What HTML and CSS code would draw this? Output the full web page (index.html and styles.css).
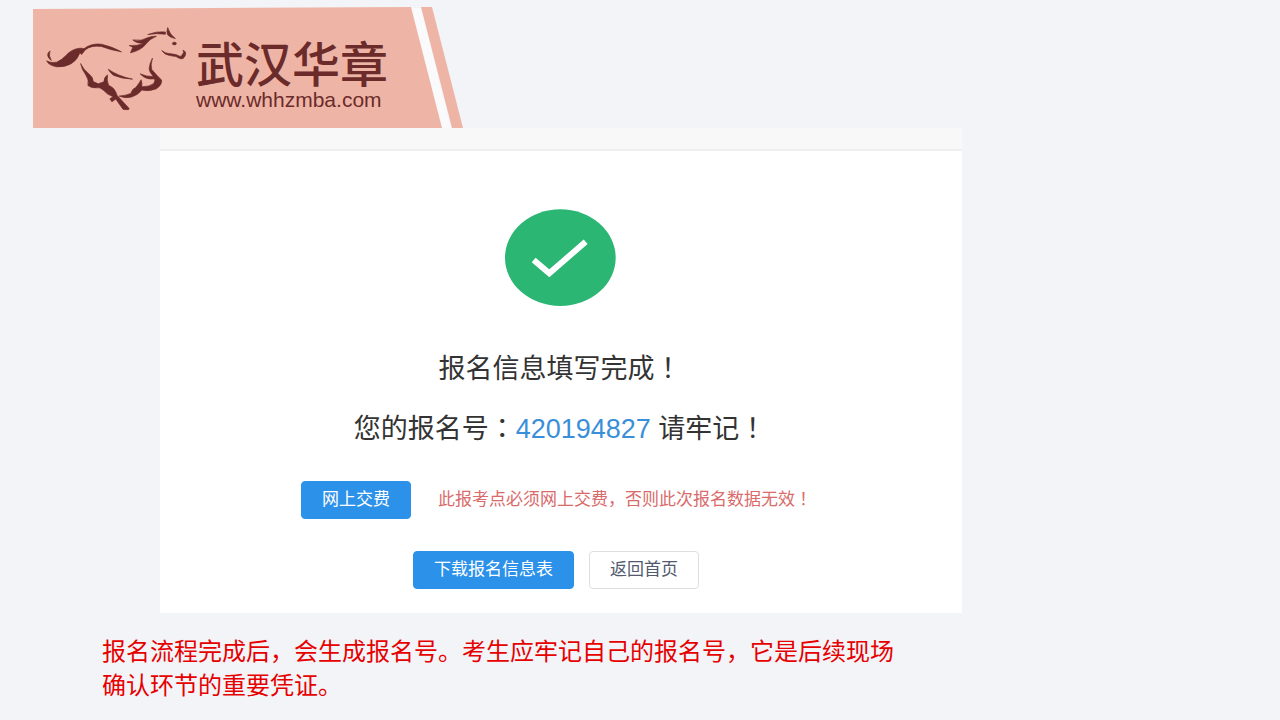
FILE: index.html
```html
<!DOCTYPE html>
<html lang="zh-CN">
<head>
    <meta charset="UTF-8">
    <meta name="viewport" content="width=device-width, initial-scale=1.0">
    <title>报名信息填写完成</title>
    <link rel="stylesheet" href="styles.css">
</head>
<body>
    <header class="banner">
        <svg class="banner-bg" viewBox="0 0 430 120" aria-hidden="true">
            <path fill="#fafafc" d="M377 0H388L418 120H408Z"/>
            <path fill="#eeb5a6" d="M0 1L378 -1L409 120H0Z"/>
            <path fill="#eeb5a6" d="M388 -1H399L430 120H419Z"/>
        </svg>
        <div class="brand">
            <svg class="horse" viewBox="45 75 430 260" fill="#6b2b2b" stroke="#6b2b2b" stroke-width="2" aria-hidden="true">
                <!-- 尾巴和背部 -->
                <path d="M60 152Q44 165 64 181Q55 166 60 152Z"/>
                <path d="M50 182Q62 190 80 186Q95 180 108 166Q125 146 150 144L163 145Q185 128 215 132Q250 140 275 155Q240 149 215 139Q185 134 166 149L155 163L150 158Q142 180 125 190Q105 202 80 200Q56 196 50 182Z"/>
                <!-- 头部和鬃毛 -->
                <path d="M302 158L309 141L298 136Q325 138 340 128Q320 130 309 119Q335 124 355 112Q368 107 380 108Q360 116 350 130Q335 150 302 158Z"/>
                <path d="M354 103Q380 92 407 95V102Q380 98 354 103Z"/>
                <path d="M414 82Q420 103 437 115Q420 112 413 103Q410 92 414 82Z"/>
                <ellipse cx="434" cy="130" rx="6" ry="4"/>
                <path d="M396 151Q405 160 425 161Q440 162 450 168Q458 170 458 162Q464 158 460 150Q471 154 467 165Q462 179 450 175Q440 167 425 167Q405 165 396 151Z"/>
                <!-- 前腿、腹部和后腿 -->
                <path d="M368 174Q362 195 366 208Q380 225 396 240Q397 255 380 266Q360 275 336 270Q325 285 305 291Q285 296 268 288Q290 286 303 280Q308 265 318 262Q328 250 334 239Q338 250 336 260Q360 260 372 250Q378 240 373 236Q348 240 331 221Q350 230 371 229Q358 215 358 205Q360 188 368 174Z"/>
                <path d="M235 207Q265 228 308 237Q275 236 250 225Q240 217 235 207Z"/>
                <path d="M152 190Q160 208 178 222Q190 232 190 244L205 251L222 245Q222 232 233 224Q230 240 236 255Q252 262 257 274L262 286Q275 300 298 325L296 329L280 328Q268 312 258 297L246 305L240 296L250 290Q232 284 220 270Q210 260 200 263Q185 265 174 256Q178 240 168 225Q155 208 152 190Z"/>
            </svg>
            <div class="brand-text">
                <strong class="brand-name">武汉华章</strong>
                <span class="brand-url">www.whhzmba.com</span>
            </div>
        </div>
    </header>

    <main class="card">
        <div class="card-bar"></div>
        <div class="card-body">
            <svg class="done-icon" viewBox="0 0 333 291" role="img" aria-label="完成">
                <ellipse cx="166" cy="146" rx="166" ry="145" fill="#2bb673"/>
                <path d="M86 153L133 193L242 98" fill="none" stroke="#fff" stroke-width="18"/>
            </svg>
            <h1 class="title">报名信息填写完成<span class="mark" lang="zh-TW">！</span></h1>
            <p class="title">您的报名号<span class="mark" lang="zh-TW">：</span><span class="number">420194827</span> 请牢记<span class="mark" lang="zh-TW">！</span></p>
            <div class="pay-row">
                <button type="button" class="btn btn-primary">网上交费</button>
                <span class="warning">此报考点必须网上交费，否则此次报名数据无效<span class="mark" lang="zh-TW">！</span></span>
            </div>
            <div class="action-row">
                <button type="button" class="btn btn-primary">下载报名信息表</button>
                <button type="button" class="btn">返回首页</button>
            </div>
        </div>
    </main>

    <p class="tip">报名流程完成后，会生成报名号。考生应牢记自己的报名号，它是后续现场确认环节的重要凭证。</p>
</body>
</html>
```
FILE: styles.css
```css
body {
    margin: 0;
    background-color: #f2f4f8;
    font-family: "Liberation Sans", "Noto Sans CJK SC", sans-serif;
    color: #333;
}

/* 居中的全角标点 */
.mark {
    font-family: "Liberation Sans", "Noto Sans CJK TC", sans-serif;
}

.banner {
    display: grid;
    justify-content: start;
    padding: 8px 0 0 33px;
}
.banner-bg {
    grid-area: 1 / 1;
    width: 430px;
    height: 120px;
    overflow: visible;
}
.brand {
    grid-area: 1 / 1;
    display: flex;
    align-items: flex-start;
    gap: 8px;
    padding: 17px 0 0 12px;
}
.horse {
    width: 143px;
    height: 87px;
}
.brand-text {
    display: flex;
    flex-direction: column;
    padding-top: 17px;
    color: #6b2b2b;
}
.brand-name {
    font-size: 48px;
    font-weight: 500;
    line-height: 48px;
}
.brand-url {
    font-size: 21px;
    line-height: 20px;
}

.card {
    max-width: 802px;
    margin-left: 12.5%;
    background-color: #fff;
}
.card-bar {
    height: 21px;
    background-color: #f8f8f8;
    border-bottom: 2px solid #efefef;
}
.card-body {
    display: flex;
    flex-direction: column;
    align-items: center;
    padding: 58px 2px 24px 0;
}
.done-icon {
    width: 111px;
    height: 97px;
    margin-bottom: 43px;
}
.title {
    margin: 0 0 20px;
    font-size: 27px;
    font-weight: 400;
    line-height: 40px;
}
.number {
    color: #3a8fd8;
}

.pay-row {
    display: flex;
    align-items: center;
    gap: 27px;
    width: 100%;
    max-width: 518px;
    margin-top: 12px;
}
.action-row {
    display: flex;
    gap: 15px;
    margin-top: 32px;
    padding-right: 8px;
}
.btn {
    box-sizing: border-box;
    height: 38px;
    padding: 0 20px;
    border: 1px solid #dcdee2;
    border-radius: 4px;
    background-color: #fff;
    font-family: inherit;
    font-size: 17px;
    line-height: 36px;
    color: #515a6e;
    cursor: pointer;
}
.btn-primary {
    border-color: #2b91e9;
    background-color: #2b91e9;
    color: #fff;
}
.warning {
    font-size: 17px;
    line-height: 20px;
    color: #d96b6b;
}

.tip {
    max-width: 800px;
    margin: 22px 0 0 102px;
    font-size: 24px;
    line-height: 34px;
    color: #e60000;
}
```
